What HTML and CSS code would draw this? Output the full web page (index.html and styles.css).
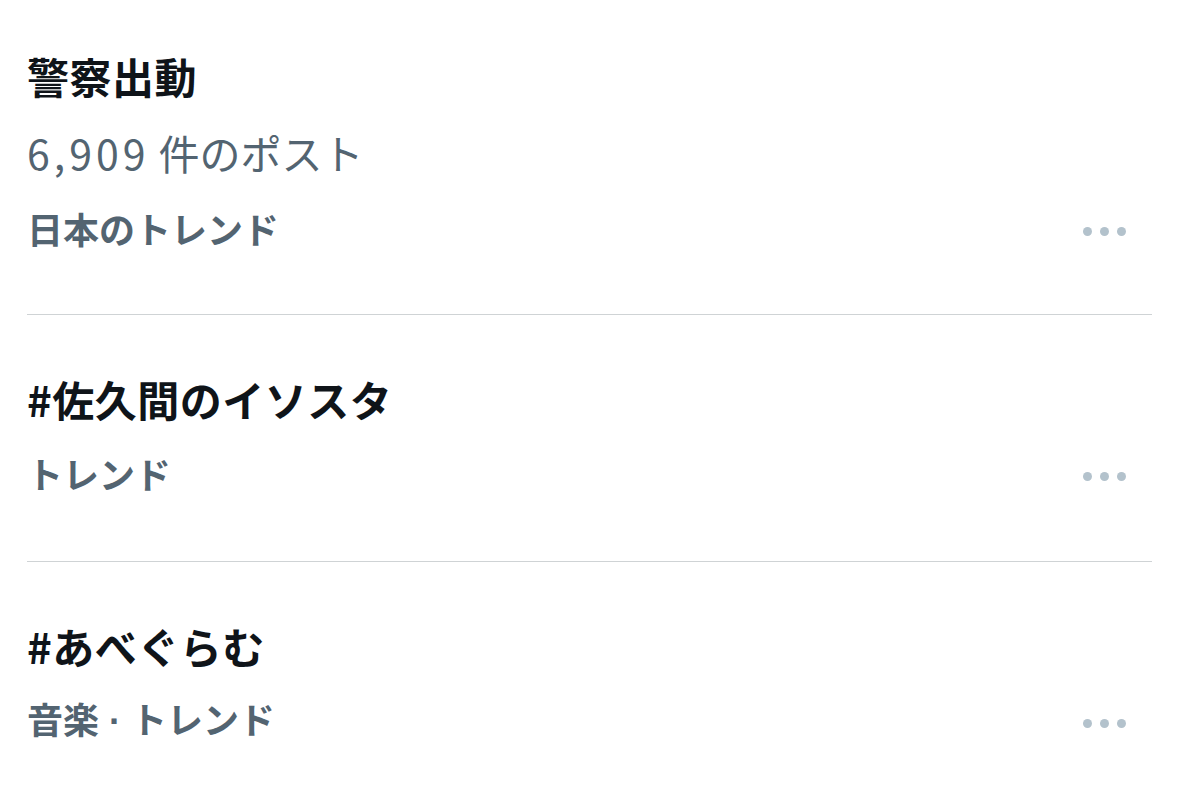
FILE: index.html
```html
<!DOCTYPE html>
<html lang="ja">
<head>
<meta charset="utf-8">
<link rel="stylesheet" href="styles.css">
</head>
<body>
<div class="list">
  <div class="trend first">
    <div class="title">警察出動</div>
    <div class="count"><span class="num">6,909</span> 件のポスト</div>
    <div class="meta-row"><span class="meta">日本のトレンド</span><span class="more"><i></i><i></i><i></i></span></div>
  </div>
  <div class="trend">
    <div class="title">#佐久間のイソスタ</div>
    <div class="meta-row"><span class="meta">トレンド</span><span class="more"><i></i><i></i><i></i></span></div>
  </div>
  <div class="trend last">
    <div class="title">#あべぐらむ</div>
    <div class="meta-row"><span class="meta">音楽<span class="sep"> · </span>トレンド</span><span class="more"><i></i><i></i><i></i></span></div>
  </div>
</div>
</body>
</html>
```

FILE: styles.css
```css
html, body {
  margin: 0;
  padding: 0;
  background: #ffffff;
}
body {
  font-family: "Noto Sans CJK JP", "Noto Sans", sans-serif;
  width: 1179px;
  height: 790px;
  overflow: hidden;
}
.list {
  padding: 0 27px;
}
.trend {
  display: flex;
  flex-direction: column;
  gap: 18px;
  padding: 56px 0 60px;
  border-bottom: 1px solid #cfd3d5;
}
.trend.first {
  padding-top: 48px;
  padding-bottom: 58px;
  gap: 20px;
}
.trend.last {
  border-bottom: none;
}
.title {
  font-size: 42px;
  line-height: 56px;
  font-weight: 700;
  letter-spacing: 0.5px;
  color: #0f1419;
}
.count {
  font-size: 41px;
  line-height: 56px;
  font-weight: 400;
  color: #536471;
}
.num {
  letter-spacing: 4px;
}
.meta-row {
  display: flex;
  align-items: center;
  justify-content: space-between;
  height: 56px;
}
.meta {
  font-size: 36px;
  line-height: 56px;
  font-weight: 700;
  color: #536471;
}
.sep {
  font-family: "Liberation Sans", sans-serif;
}
.more {
  display: flex;
  gap: 8px;
  padding-right: 26px;
  position: relative;
  top: 3px;
}
.more i {
  width: 9px;
  height: 9px;
  border-radius: 50%;
  background: #b3c2cc;
}
```
